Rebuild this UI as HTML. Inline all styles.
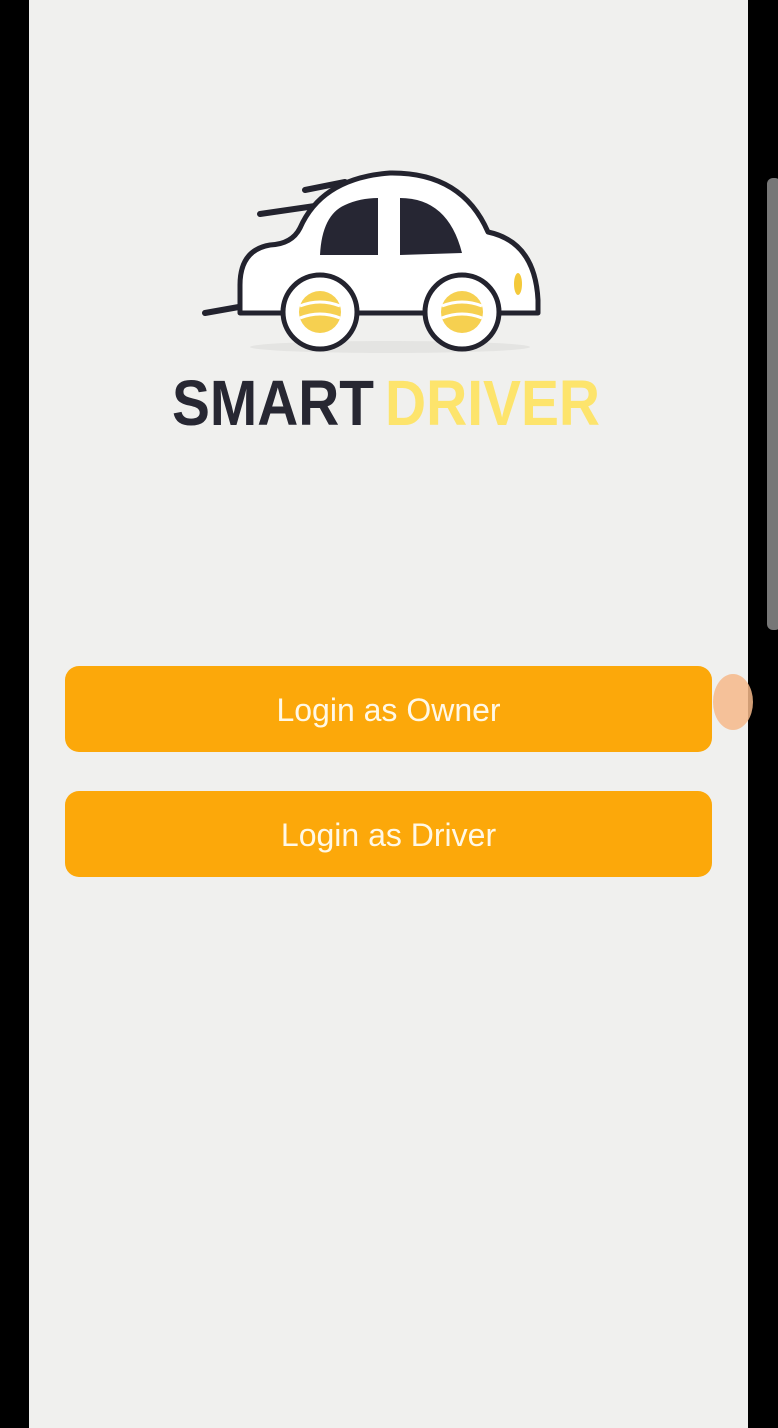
<!DOCTYPE html>
<html><head><meta charset="utf-8">
<style>
html,body{margin:0;padding:0;width:778px;height:1428px;background:#000;overflow:hidden;font-family:"Liberation Sans",sans-serif}
.screen{position:absolute;left:29px;top:0;width:719px;height:1428px;background:#f0f0ee}
.btn{position:absolute;left:65px;width:647px;height:86px;background:#fca80a;border-radius:14px;color:#fff8e6;font-size:32px;display:flex;align-items:center;justify-content:center;padding-top:3px;box-sizing:border-box}
.sb{position:absolute;left:767px;top:178px;width:14px;height:452px;background:#777;border-radius:6px}
.dot{position:absolute;left:713px;top:674px;width:40px;height:56px;border-radius:50%;background:#f6b98a;opacity:.85}
</style></head><body>
<div class="screen"></div>
<div class="sb"></div>
<svg style="position:absolute;left:0;top:0" width="778" height="460">
 <ellipse cx="390" cy="347" rx="140" ry="6" fill="#e4e4e2"/>
 <g stroke="#23232e" stroke-linecap="round" stroke-linejoin="round">
  <path d="M205 313 L250 305 M260 214 L315 206 M305 190 L345 182" stroke-width="6" fill="none"/>
  <path d="M240 313 L240 285 Q240 250 270 245 Q292 244 300 228 Q322 178 390 173 Q462 172 488 232 Q535 242 538 300 L538 313 Z" fill="#fff" stroke-width="5"/>
 </g>
 <path d="M320 255 Q322 215 345 205 Q360 198 378 198 L378 255 Z" fill="#262633"/>
 <path d="M400 198 Q448 198 462 253 L400 255 Z" fill="#262633"/>
 <ellipse cx="518" cy="284" rx="4" ry="11" fill="#f4c93a"/>
 <g stroke="#23232e" stroke-width="5" fill="#fff">
  <circle cx="320" cy="312" r="37"/><circle cx="462" cy="312" r="37"/>
 </g>
 <g fill="#f6d050">
  <circle cx="320" cy="312" r="21"/><circle cx="462" cy="312" r="21"/>
 </g>
 <g stroke="#fff" stroke-width="3" fill="none">
  <path d="M300 306 Q320 298 340 306 M300 318 Q320 310 340 318"/>
  <path d="M442 306 Q462 298 482 306 M442 318 Q462 310 482 318"/>
 </g>
 <text x="172" y="425" font-family="Liberation Sans, sans-serif" font-weight="bold" font-size="64" fill="#272732" textLength="202" lengthAdjust="spacingAndGlyphs">SMART</text>
 <text x="385" y="425" font-family="Liberation Sans, sans-serif" font-weight="bold" font-size="64" fill="#fde46c" textLength="215" lengthAdjust="spacingAndGlyphs">DRIVER</text>
</svg>
<div class="dot"></div>
<div class="btn" style="top:666px">Login as Owner</div>
<div class="btn" style="top:791px">Login as Driver</div>
</body></html>
